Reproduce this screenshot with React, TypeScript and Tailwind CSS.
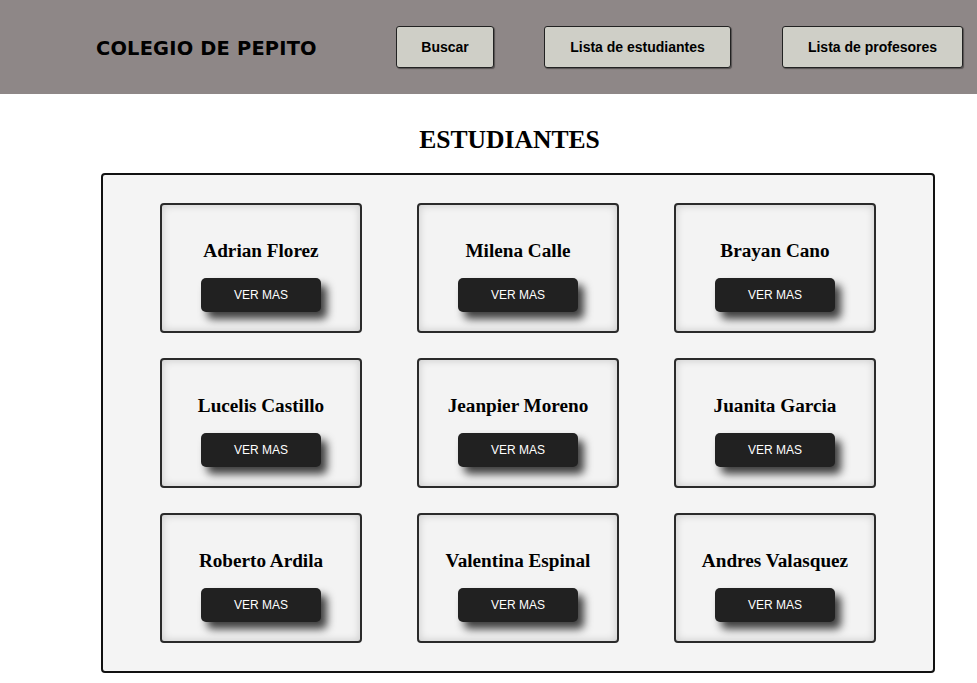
import React from "react";

const students = [
  "Adrian Florez",
  "Milena Calle",
  "Brayan Cano",
  "Lucelis Castillo",
  "Jeanpier Moreno",
  "Juanita Garcia",
  "Roberto Ardila",
  "Valentina Espinal",
  "Andres Valasquez",
];

function NavButton({ label, className }: { label: string; className?: string }) {
  return (
    <button
      className={
        "h-[42px] bg-[#cfcfc7] border border-[#222] rounded-[3px] text-[14px] font-bold text-black shadow-[1px_1px_1px_rgba(0,0,0,0.4)] flex items-center justify-center " +
        (className ?? "")
      }
      style={{ fontFamily: '"Liberation Sans", Arial, sans-serif' }}
    >
      {label}
    </button>
  );
}

export default function App() {
  return (
    <div className="min-h-[683px] bg-white">
      <header className="h-[94px] bg-[#8e8787] flex items-center">
        <h1
          className="ml-[96px] mt-[3px] w-[300px] text-[19.4px] font-bold text-black tracking-[0.2px]"
          style={{ fontFamily: '"DejaVu Sans", Verdana, sans-serif' }}
        >
          COLEGIO DE PEPITO
        </h1>
        <NavButton label="Buscar" className="w-[98px]" />
        <NavButton label="Lista de estudiantes" className="ml-[50px] w-[187px]" />
        <NavButton label="Lista de profesores" className="ml-[51px] w-[181px]" />
      </header>

      <main>
        <h2
          className="mt-[31px] ml-[101px] w-[834px] pr-[17px] text-center text-[25.6px] leading-[30px] font-bold text-black"
          style={{ fontFamily: '"Liberation Serif", "Times New Roman", serif' }}
        >
          ESTUDIANTES
        </h2>
        <div className="mt-[18px] ml-[101px] w-[834px] h-[500px] bg-[#f4f4f4] border-2 border-[#111] rounded-[4px] pt-[28px] pl-[57px]">
          <div className="grid grid-cols-[202px_202px_202px] gap-x-[55px] gap-y-[25px]">
            {students.map((name) => (
              <div
                key={name}
                className="h-[130px] bg-[#f3f3f3] border-2 border-[#2a2a2a] rounded-[4px] shadow-[inset_0_0_8px_rgba(0,0,0,0.18)] flex flex-col items-center pt-[35px]"
              >
                <div
                  className="text-[19.2px] leading-[22px] font-bold text-black"
                  style={{ fontFamily: '"Liberation Serif", "Times New Roman", serif' }}
                >
                  {name}
                </div>
                <button
                  className="mt-[16px] w-[120px] h-[34px] bg-[#212121] rounded-[5px] text-white text-[12px] shadow-[6px_7px_8px_rgba(0,0,0,0.75)]"
                  style={{ fontFamily: '"Liberation Sans", Arial, sans-serif' }}
                >
                  VER MAS
                </button>
              </div>
            ))}
          </div>
        </div>
      </main>
    </div>
  );
}
